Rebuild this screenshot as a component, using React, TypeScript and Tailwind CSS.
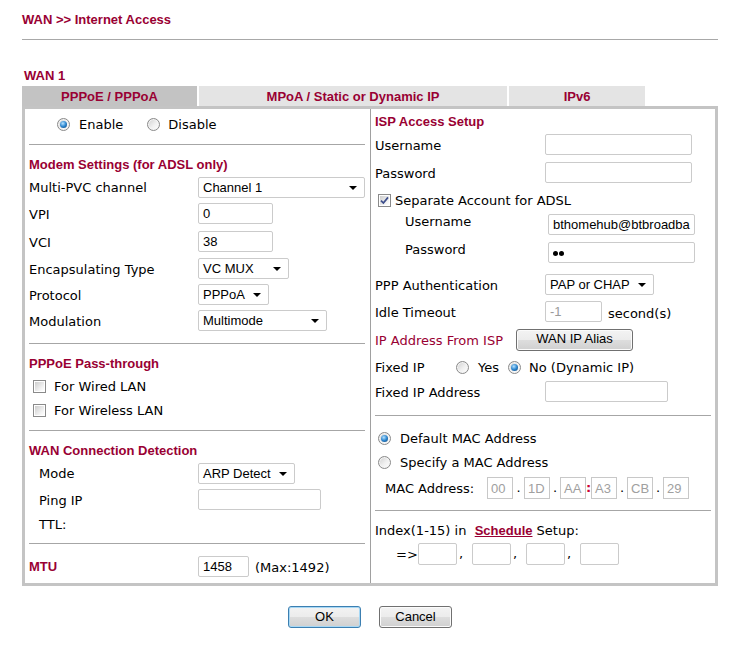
import React from "react";

const H = "font-['Liberation_Sans',Arial,sans-serif] font-bold text-[13px] leading-[16px] text-[#990033]";
const A = "font-['Liberation_Sans',Arial,sans-serif] text-[13px] leading-[16px]";

function Radio({ checked }: { checked?: boolean }) {
  return (
    <span className="inline-flex h-[13px] w-[13px] shrink-0 items-center justify-center rounded-full border border-[#8a8a8a] bg-[linear-gradient(135deg,#cfcfcf,#f0f0f0_55%,#ffffff)] shadow-[inset_0_0_0_1px_#f4f4f4]">
      {checked && (
        <span className="h-[7px] w-[7px] rounded-full bg-[radial-gradient(circle_at_40%_35%,#b6e2ff,#2c86cf_50%,#0d3d6e)]" />
      )}
    </span>
  );
}

function Check({ checked }: { checked?: boolean }) {
  return (
    <span className="inline-flex h-[13px] w-[13px] shrink-0 items-center justify-center border border-[#8a8a8a] bg-white p-[1px]">
      <span className="flex h-full w-full items-center justify-center bg-[linear-gradient(135deg,#cdcdcd,#f3f3f3_70%,#ffffff)]">
        {checked && (
          <svg width="9" height="9" viewBox="0 0 9 9">
            <path d="M1 4.6 L3.4 7 L8 1.4" stroke="#3e4f8c" strokeWidth="1.7" fill="none" />
          </svg>
        )}
      </span>
    </span>
  );
}

function Sel({ value, w }: { value: string; w: string }) {
  return (
    <span className={`flex h-[21px] ${w} shrink-0 items-center justify-between rounded-[2px] border border-[#cbcbcb] bg-white pl-[4px] pr-[7px] pt-[1px] text-black ${A}`}>
      <span>{value}</span>
      <span className="h-0 w-0 border-x-[4px] border-t-[4px] border-x-transparent border-t-black" />
    </span>
  );
}

function Inp({ value, w, gray }: { value?: string; w: string; gray?: boolean }) {
  return (
    <span className={`flex h-[21px] ${w} shrink-0 items-center overflow-hidden whitespace-nowrap rounded-[2px] border border-[#cbcbcb] bg-white pl-[4px] pt-[1px] ${gray ? "text-[#9a9a9a]" : "text-black"} ${A}`}>
      {value}
    </span>
  );
}

function Sep({ cls }: { cls: string }) {
  return <div className={`h-px bg-[#a6a6a6] ${cls}`} />;
}

function Btn({ label, w, focus }: { label: string; w: string; focus?: boolean }) {
  return (
    <span
      className={`flex h-[22px] ${w} items-center justify-center rounded-[3px] border ${
        focus ? "border-[#3c7fb1] shadow-[inset_0_0_0_1px_#a7d8f5]" : "border-[#707070] shadow-[inset_0_0_0_1px_#fbfbfb]"
      } bg-[linear-gradient(#f3f3f3,#ececec_48%,#dddddd_52%,#d0d0d0)] text-black ${A}`}
    >
      {label}
    </span>
  );
}

function LRow({ h, label, children, ind }: { h: string; label: string; children?: React.ReactNode; ind?: boolean }) {
  return (
    <div className={`flex ${h} items-center`}>
      <span className={`w-[169px] shrink-0 pt-[2px] ${ind ? "pl-[10px]" : ""}`}>{label}</span>
      {children}
    </div>
  );
}

function RRow({ h, label, children }: { h: string; label: string; children?: React.ReactNode }) {
  return (
    <div className={`flex ${h} items-center`}>
      <span className="w-[170px] shrink-0 pt-[2px]">{label}</span>
      {children}
    </div>
  );
}

function MacBox({ v }: { v: string }) {
  return (
    <span className={`flex h-[22px] w-[26px] shrink-0 items-center border border-[#c8c8c8] pl-[3px] pt-[1px] text-[#a0a0a0] ${A}`}>{v}</span>
  );
}

function IdxBox() {
  return <span className="h-[22px] w-[39px] shrink-0 rounded-[2px] border border-[#cbcbcb] bg-white" />;
}

export default function App() {
  return (
    <div className="h-[653px] w-[754px] bg-white px-[22px] font-['DejaVu_Sans',Verdana,sans-serif] text-[13px] leading-[16px] text-black">
      <div className={`pt-[12px] ${H}`}>WAN &gt;&gt; Internet Access</div>
      <div className="mt-[11px] h-px w-[696px] bg-[#a8a8a8]" />
      <div className={`mt-[28px] pl-[2px] ${H}`}>WAN 1</div>

      <div className="mt-[2px] flex h-[20px] gap-[2px]">
        <div className={`flex w-[175px] items-center justify-center bg-[#c3c3c3] pt-[2px] ${H}`}>PPPoE / PPPoA</div>
        <div className={`flex w-[308px] items-center justify-center bg-[#e4e4e4] pt-[2px] ${H}`}>MPoA / Static or Dynamic IP</div>
        <div className={`flex w-[136px] items-center justify-center bg-[#e4e4e4] pt-[2px] ${H}`}>IPv6</div>
      </div>

      <div className="flex h-[480px] w-[696px] border-[3px] border-[#c4c4c4]">
        {/* Left column */}
        <div className="flex w-[345px] flex-col pl-[4px] pr-[5px]">
          <div className="flex h-[30px] items-center pl-[28px]">
            <Radio checked />
            <span className="ml-[9px] pt-[2px]">Enable</span>
            <span className="ml-[24px] flex items-center">
              <Radio />
              <span className="ml-[8px] pt-[2px]">Disable</span>
            </span>
          </div>
          <Sep cls="mt-[5px]" />
          <div className={`mt-[8px] flex h-[21px] items-center pt-[2px] ${H}`}>Modem Settings (for ADSL only)</div>
          <LRow h="h-[26px]" label="Multi-PVC channel">
            <Sel value="Channel 1" w="w-[167px]" />
          </LRow>
          <LRow h="h-[27px]" label="VPI">
            <Inp value="0" w="w-[75px]" />
          </LRow>
          <LRow h="h-[29px]" label="VCI">
            <Inp value="38" w="w-[75px]" />
          </LRow>
          <LRow h="h-[25px]" label="Encapsulating Type">
            <Sel value="VC MUX" w="w-[91px]" />
          </LRow>
          <LRow h="h-[27px]" label="Protocol">
            <Sel value="PPPoA" w="w-[71px]" />
          </LRow>
          <LRow h="h-[25px]" label="Modulation">
            <Sel value="Multimode" w="w-[129px]" />
          </LRow>
          <Sep cls="mt-[10px]" />
          <div className={`mt-[9px] flex h-[20px] items-center pt-[2px] ${H}`}>PPPoE Pass-through</div>
          <div className="mt-[1px] flex h-[24px] items-center pl-[4px]">
            <Check />
            <span className="ml-[8px] pt-[2px]">For Wired LAN</span>
          </div>
          <div className="flex h-[24px] items-center pl-[4px]">
            <Check />
            <span className="ml-[8px] pt-[2px]">For Wireless LAN</span>
          </div>
          <Sep cls="mt-[8px]" />
          <div className={`mt-[9px] flex h-[20px] items-center pt-[2px] ${H}`}>WAN Connection Detection</div>
          <LRow h="h-[26px]" label="Mode" ind>
            <Sel value="ARP Detect" w="w-[97px]" />
          </LRow>
          <LRow h="h-[27px]" label="Ping IP" ind>
            <Inp w="w-[123px]" />
          </LRow>
          <LRow h="h-[22px]" label="TTL:" ind />
          <Sep cls="mt-[8px]" />
          <div className="mt-[11px] flex h-[22px] items-center">
            <span className={`w-[169px] shrink-0 pt-[2px] ${H}`}>MTU</span>
            <Inp value="1458" w="w-[51px]" />
            <span className="ml-[6px] mt-[4px]">(Max:1492)</span>
          </div>
        </div>

        <div className="w-px bg-[#a0a0a0]" />

        {/* Right column */}
        <div className="flex w-[344px] flex-col pl-[4px]">
          <div className={`mt-[2px] flex h-[20px] items-center pt-[2px] ${H}`}>ISP Access Setup</div>
          <RRow h="h-[27px]" label="Username">
            <Inp w="w-[147px]" />
          </RRow>
          <RRow h="h-[29px]" label="Password">
            <Inp w="w-[147px]" />
          </RRow>
          <div className="flex h-[26px] items-center pl-[3px]">
            <Check checked />
            <span className="ml-[4px] pt-[2px]">Separate Account for ADSL</span>
          </div>
          <div className="flex h-[23px] items-center">
            <span className="mb-[6px] w-[173px] shrink-0 pl-[30px]">Username</span>
            <Inp value="bthomehub@btbroadba" w="w-[147px]" />
          </div>
          <div className="flex h-[33px] items-center">
            <span className="mb-[6px] w-[173px] shrink-0 pl-[30px]">Password</span>
            <span className="flex h-[21px] w-[147px] items-center rounded-[2px] border border-[#cbcbcb] bg-white pl-[4px] pt-[2px]">
              <span className="h-[5px] w-[5px] rounded-full bg-black" />
              <span className="ml-[1px] h-[5px] w-[5px] rounded-full bg-black" />
            </span>
          </div>
          <RRow h="h-[31px]" label="PPP Authentication">
            <Sel value="PAP or CHAP" w="w-[109px]" />
          </RRow>
          <RRow h="h-[23px]" label="Idle Timeout">
            <Inp value="-1" w="w-[57px]" gray />
            <span className="ml-[6px] mt-[5px]">second(s)</span>
          </RRow>
          <div className="flex h-[33px] items-center">
            <span className="w-[141px] shrink-0 pt-[2px] text-[#990033]">IP Address From ISP</span>
            <span className="flex h-[22px] w-[117px] items-center justify-center rounded-[3px] border border-[#707070] bg-[linear-gradient(#f3f3f3,#ececec_48%,#dddddd_52%,#d0d0d0)] pb-[2px] shadow-[inset_0_0_0_1px_#fbfbfb] font-['Liberation_Sans',Arial,sans-serif] text-[13px]">
              WAN IP Alias
            </span>
          </div>
          <div className="flex h-[22px] items-center">
            <span className="w-[81px] shrink-0 pt-[2px]">Fixed IP</span>
            <Radio />
            <span className="ml-[9px] pt-[2px]">Yes</span>
            <span className="ml-[9px] flex">
              <Radio checked />
            </span>
            <span className="ml-[8px] pt-[2px]">No (Dynamic IP)</span>
          </div>
          <RRow h="h-[27px]" label="Fixed IP Address">
            <Inp w="w-[123px]" />
          </RRow>
          <Sep cls="mt-[10px] mr-[4px]" />
          <div className="mt-[10px] flex h-[24px] items-center pl-[3px]">
            <Radio checked />
            <span className="ml-[9px] pt-[2px]">Default MAC Address</span>
          </div>
          <div className="flex h-[24px] items-center pl-[3px]">
            <Radio />
            <span className="ml-[9px] pt-[2px]">Specify a MAC Address</span>
          </div>
          <div className="flex h-[28px] items-center pl-[10px]">
            <span className="w-[102px] shrink-0 pt-[2px]">MAC Address:</span>
            <MacBox v="00" />
            <span className="w-[11px] text-center">.</span>
            <MacBox v="1D" />
            <span className="w-[10px] text-center">.</span>
            <MacBox v="AA" />
            <span className="w-[5px] text-center font-bold text-[#cc0033]">:</span>
            <MacBox v="A3" />
            <span className="w-[10px] text-center">.</span>
            <MacBox v="CB" />
            <span className="w-[10px] text-center">.</span>
            <MacBox v="29" />
          </div>
          <Sep cls="mt-[8px] mr-[4px]" />
          <div className="mt-[8px] flex h-[22px] items-center whitespace-pre pt-[2px]">
            <span>Index(1-15) in  </span>
            <span className={`underline ${H}`}>Schedule</span>
            <span> Setup:</span>
          </div>
          <div className="flex h-[25px] items-center pl-[21px]">
            <span className="w-[22px] shrink-0 pt-[2px]">=&gt;</span>
            <IdxBox />
            <span className="w-[15px] pl-[2px]">,</span>
            <IdxBox />
            <span className="w-[15px] pl-[2px]">,</span>
            <IdxBox />
            <span className="w-[15px] pl-[2px]">,</span>
            <IdxBox />
          </div>
        </div>
      </div>

      <div className="mt-[20px] flex w-[696px] justify-center gap-[18px]">
        <Btn label="OK" w="w-[73px]" focus />
        <Btn label="Cancel" w="w-[73px]" />
      </div>
    </div>
  );
}
